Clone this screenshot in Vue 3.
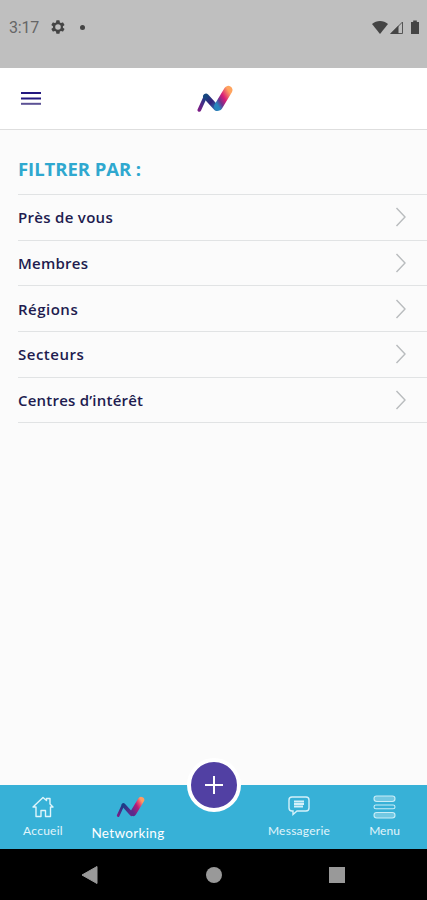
<script setup>
const filters = [
  { label: 'Près de vous', track: '0.3px' },
  { label: 'Membres', track: '0.25px' },
  { label: 'Régions', track: '0.5px' },
  { label: 'Secteurs', track: '0.5px' },
  { label: 'Centres d’intérêt', track: '0.22px' },
]
</script>

<template>
  <div class="screen">
    <div class="status">
      <span class="time">3:17</span>
      <svg class="gear" width="16" height="16" viewBox="0 0 24 24">
        <path fill="#444" fill-rule="evenodd" d="M19.4 13a7.500 7.500 0 0 0 0-2l2.100-1.600a.5.5 0 0 0 .1-.6l-2-3.500a.5.5 0 0 0-.6-.2l-2.500 1a7.300 7.300 0 0 0-1.700-1l-.4-2.600a.5.500 0 0 0-.5-.5h-4a.5.5 0 0 0-.5.500L9 5.100a7.300 7.300 0 0 0-1.700 1l-2.500-1a.5.5 0 0 0-.6.2l-2 3.500a.5.5 0 0 0 .1.600L4.500 11a7.500 7.500 0 0 0 0 2l-2.200 1.600a.5.5 0 0 0-.1.600l2 3.500c.1.200.4.300.6.200l2.500-1a7.300 7.300 0 0 0 1.700 1l.4 2.600c0 .3.200.5.500.5h4c.300 0 .5-.2.500-.5l.4-2.600a7.300 7.300 0 0 0 1.700-1l2.500 1c.2.100.5 0 .6-.2l2-3.500a.5.5 0 0 0-.1-.6ZM12 16.200a4.200 4.200 0 1 1 0-8.400 4.200 4.200 0 0 1 0 8.400Z" />
      </svg>
      <i class="dot"></i>
      <svg class="signals" width="49" height="16" viewBox="0 0 49 16">
        <path fill="#444" d="M0 4C4.500 0 11.500 0 16 4L8 14Z" />
        <path fill="none" stroke="#555" d="M19 13.500 30.500 2v11.500Z" />
        <path fill="#444" d="M18 14 26.500 5.500V14Z" />
        <path fill="#444" d="M39 2h2.200V.5h3.600V2H47v12h-8Z" />
      </svg>
    </div>

    <header class="header">
      <svg class="burger" width="20" height="14" viewBox="0 0 20 14">
        <path d="M0 2h20M0 7.500h20" stroke="#241880" stroke-width="2" />
        <path d="M0 12.800h20" stroke="#5c5295" stroke-width="2" />
      </svg>
      <svg class="logo" width="36" height="28" viewBox="0 0 36 28">
        <defs>
          <linearGradient id="rise" x1="0" y1="1" x2="1" y2="0"><stop stop-color="#7b1c85" /><stop offset="1" stop-color="#193c86" /></linearGradient>
          <linearGradient id="fall" x1="0" y1="0" x2="1" y2="1"><stop stop-color="#16477f" /><stop offset=".5" stop-color="#35217c" /><stop offset="1" stop-color="#2c78b3" /></linearGradient>
          <linearGradient id="tip" x1="0" y1="1" x2="1" y2="0"><stop stop-color="#2885bd" /><stop offset=".25" stop-color="#71318d" /><stop offset=".55" stop-color="#d91c78" /><stop offset="1" stop-color="#ffa45f" /></linearGradient>
          <linearGradient id="tipSmall" x1="0" y1="1" x2="1" y2="0"><stop stop-color="#5b2a8c" /><stop offset=".5" stop-color="#b51c78" /><stop offset=".75" stop-color="#e84a70" /><stop offset="1" stop-color="#ff9c63" /></linearGradient>
          <linearGradient id="fallSmall" x1="0" y1="0" x2="1" y2="1"><stop stop-color="#1b3c86" /><stop offset="1" stop-color="#6a2a8c" /></linearGradient>
        </defs>
        <path d="M2.300 25 8 12.500" stroke="url(#rise)" stroke-width="3.600" stroke-linecap="round" />
        <path d="M9 11.500 19.500 23" stroke="url(#fall)" stroke-width="5.800" stroke-linecap="round" />
        <path d="M21.300 21.500 31.300 5" stroke="url(#tip)" stroke-width="8.400" stroke-linecap="round" />
      </svg>
    </header>

    <main class="content">
      <h1><span>FILTRER PAR :</span></h1>
      <ul>
        <li v-for="f in filters" :key="f.label">
          <span :style="{ letterSpacing: f.track }">{{ f.label }}</span>
          <svg width="12" height="20" viewBox="0 0 12 20"><path d="M1.500 1 10 10 1.500 19" fill="none" stroke="#b9bcbe" stroke-width="1.400" /></svg>
        </li>
      </ul>
    </main>

    <nav class="tabs">
      <div class="tab home">
        <svg width="22" height="22" viewBox="0 0 22 22" fill="none" stroke="#dff5fb" stroke-width="1.400" stroke-linejoin="round">
          <path d="M4 10.500V20.500H9V14.500H13.500V20.500H18.500V10.500M4 11H1L11 1.500 14.500 4.500V2.500H18V8L21 11H18.500" />
        </svg>
        <span>Accueil</span>
      </div>
      <div class="tab network">
        <svg width="29" height="22" viewBox="0 0 36 28">
          <path d="M2.300 25 8 12.500" stroke="url(#rise)" stroke-width="3.400" stroke-linecap="round" />
          <path d="M9 11.500 19.500 23" stroke="url(#fallSmall)" stroke-width="5" stroke-linecap="round" />
          <path d="M21.500 21.500 31.500 5" stroke="url(#tipSmall)" stroke-width="8" stroke-linecap="round" />
        </svg>
        <span>Networking</span>
      </div>
      <div class="tab message">
        <svg width="22" height="20" viewBox="0 0 22 20" fill="none" stroke="#d5f1fa" stroke-width="1.400">
          <path d="M4 1H18Q21 1 21 4V12Q21 15 18 15H9L5 18.500V15H4Q1 15 1 12V4Q1 1 4 1Z" />
          <path d="M6 5.500H16M6 8H16M6 10.500H15" stroke-width="1.800" />
        </svg>
        <span>Messagerie</span>
      </div>
      <div class="tab menu">
        <svg width="23" height="24" viewBox="0 0 23 24" fill="#72c8e2" stroke="#c9edf7" stroke-width="1.100">
          <rect x="1" y="1" width="21" height="5.500" rx="2.700" />
          <rect x="1" y="10" width="21" height="3.800" rx="1.900" fill="none" />
          <rect x="1" y="17.500" width="21" height="5.500" rx="2.700" />
        </svg>
        <span>Menu</span>
      </div>
      <button class="add" aria-label="Ajouter">
        <svg width="18" height="18" viewBox="0 0 18 18"><path d="M9 0v18M0 9h18" stroke="#fff" stroke-width="2" /></svg>
      </button>
    </nav>

    <footer class="system">
      <svg width="18" height="20" viewBox="0 0 18 20"><path d="M1 10 16 1.500V18.500Z" fill="#999" stroke="#999" stroke-linejoin="round" /></svg>
      <i class="circle"></i>
      <i class="square"></i>
    </footer>
  </div>
</template>

<style>
body { margin: 0; background: #fbfbfb; }
</style>

<style scoped>
.screen { width: 427px; height: 900px; display: flex; flex-direction: column; background: #fbfbfb; font-family: Lato, "Open Sans", sans-serif; overflow: hidden; }
.status { box-sizing: border-box; height: 68px; flex: none; display: flex; align-items: flex-start; padding: 19px 6px 0 9px; background: #bfbfbf; }
.time { width: 41px; font: 16px/18px Roboto, sans-serif; color: #666; letter-spacing: -.2px; }
.dot { width: 5px; height: 5px; margin: 6px 0 0 14px; border-radius: 50%; background: #444; }
.signals { margin: 1px 0 0 auto; }
.header { box-sizing: border-box; height: 62px; flex: none; display: flex; align-items: flex-start; padding: 23px 0 0 21px; background: #fff; border-bottom: 1px solid #dedede; }
.logo { margin: -6px 0 0 156px; fill: none; }
.content { flex: 1; padding-left: 18px; }
h1 { box-sizing: border-box; height: 65px; margin: 0; padding-top: 27px; border-bottom: 1px solid #e1e3e4; color: #2fa8cf; font: 700 18.500px/24px "Open Sans", sans-serif; }
h1 span { letter-spacing: -.05px; }
ul { margin: 0; padding: 0; list-style: none; }
li { box-sizing: border-box; height: 45.700px; display: flex; align-items: center; justify-content: space-between; padding: 0 20px 0 0; border-bottom: 1px solid #e1e3e4; color: #211b4f; font: 600 15px/20px "Open Sans", sans-serif; }
.tabs { position: relative; height: 64px; flex: none; display: grid; grid-template-columns: 86px 84px 86px 86px 85px; background: #37b1d7; color: #e1f5fb; }
.tab { display: flex; flex-direction: column; align-items: center; white-space: nowrap; font-size: 12px; line-height: 16px; }
.home { padding-top: 11px; }
.home span { margin-top: 5px; letter-spacing: .25px; }
.network { padding-top: 11px; fill: none; }
.network span { margin-top: 7px; font-size: 13.500px; color: #fff; letter-spacing: .35px; }
.network svg { margin-left: 5px; }
.message { grid-column: 4; padding-top: 11px; }
.message span { margin-top: 7px; letter-spacing: .25px; }
.menu { padding-top: 10px; }
.menu span { margin-top: 4px; }
.add { position: absolute; left: 187px; top: -27px; width: 54px; height: 54px; display: flex; align-items: center; justify-content: center; padding: 0; border: 4px solid #fff; border-radius: 50%; background: #5140a3; }
.system { height: 51px; flex: none; box-sizing: border-box; display: flex; align-items: center; padding-left: 81px; background: #000; }
.circle { width: 16px; height: 16px; margin-left: 107px; border-radius: 50%; background: #999; }
.square { width: 16px; height: 16px; margin-left: 107px; background: #999; }
</style>
